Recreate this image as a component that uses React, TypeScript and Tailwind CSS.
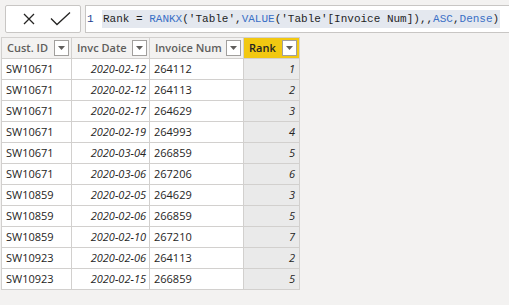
import React from "react";

const rows: [string, string, string, number][] = [
  ["SW10671", "2020-02-12", "264112", 1],
  ["SW10671", "2020-02-12", "264113", 2],
  ["SW10671", "2020-02-17", "264629", 3],
  ["SW10671", "2020-02-19", "264993", 4],
  ["SW10671", "2020-03-04", "266859", 5],
  ["SW10671", "2020-03-06", "267206", 6],
  ["SW10859", "2020-02-05", "264629", 3],
  ["SW10859", "2020-02-06", "266859", 5],
  ["SW10859", "2020-02-10", "267210", 7],
  ["SW10923", "2020-02-06", "264113", 2],
  ["SW10923", "2020-02-15", "266859", 5],
];

function Drop() {
  return (
    <div className="w-[15px] h-[16px] mr-[2px] border border-[#a19f9d] bg-white flex items-center justify-center shrink-0">
      <svg width="7" height="4" viewBox="0 0 7 4">
        <path d="M0 0 H7 L3.5 4 Z" fill="#605e5c" />
      </svg>
    </div>
  );
}

function Head({ label, yellow }: { label: string; yellow?: boolean }) {
  return (
    <div
      className={`h-[21px] flex items-center justify-between pl-[5px] border-r border-b border-[#d2d0ce] ${
        yellow ? "bg-[#f2c811] text-[#252423]" : "bg-[#f3f2f1] text-[#605e5c]"
      } font-semibold`}
    >
      <span>{label}</span>
      <Drop />
    </div>
  );
}

export default function App() {
  return (
    <div
      className="w-[509px] h-[305px] bg-[#f3f2f1] overflow-hidden text-[11px]"
      style={{ fontFamily: '"Open Sans", "Noto Sans", sans-serif' }}
    >
      <div className="flex pt-[5px] h-[37px]">
        <div className="ml-[5px] w-[76px] h-[28px] bg-white border border-[#c8c6c4] rounded-[2px] flex items-center">
          <svg width="12" height="12" viewBox="0 0 12 12" className="ml-[17px]">
            <path d="M1 1 L11 11 M11 1 L1 11" stroke="#252423" strokeWidth="1.3" fill="none" />
          </svg>
          <svg width="21" height="14" viewBox="0 0 21 14" className="ml-[15px]">
            <path d="M1 6.5 L7 12.5 L20 0.5" stroke="#252423" strokeWidth="1.3" fill="none" />
          </svg>
        </div>
        <div className="ml-[4px] flex-1 h-[28px] bg-white border-y border-l border-[#c8c6c4] flex items-center mr-[-2px]">
          <span
            className="text-[11px] text-[#1f3f8f] ml-[1px] w-[15px] text-left"
            style={{ fontFamily: '"Liberation Mono", monospace' }}
          >
            1
          </span>
          <span
            className="text-[11px] leading-[18px] h-[18px] bg-[#e4e8ef] text-[#1f1f1f] whitespace-pre px-[1px]"
            style={{ fontFamily: '"Liberation Mono", monospace' }}
          >
            Rank = <span className="text-[#3a6fc6]">RANKX</span>('Table',<span className="text-[#3a6fc6]">VALUE</span>('Table'[Invoice Num]),,<span className="text-[#3a6fc6]">ASC</span>,<span className="text-[#3a6fc6]">Dense</span>)
          </span>
        </div>
      </div>
      <div className="ml-[1px] grid grid-cols-[70px_78px_94px_56px] w-[299px] border-l border-t border-[#d2d0ce]">
        <Head label="Cust. ID" />
        <Head label="Invc Date" />
        <Head label="Invoice Num" />
        <Head label="Rank" yellow />
        {rows.map((r, i) => (
          <React.Fragment key={i}>
            <div className="h-[21px] flex items-center pl-[4px] bg-white border-r border-b border-[#d2d0ce] text-[#252423]">
              {r[0]}
            </div>
            <div className="h-[21px] flex items-center justify-end pr-[3px] bg-white border-r border-b border-[#d2d0ce] text-[#252423] italic">
              {r[1]}
            </div>
            <div className="h-[21px] flex items-center pl-[4px] bg-white border-r border-b border-[#d2d0ce] text-[#252423]">
              {r[2]}
            </div>
            <div className="h-[21px] flex items-center justify-end pr-[4px] bg-[#eaeaea] border-r border-b border-[#d2d0ce] text-[#252423] italic">
              {r[3]}
            </div>
          </React.Fragment>
        ))}
      </div>
    </div>
  );
}
